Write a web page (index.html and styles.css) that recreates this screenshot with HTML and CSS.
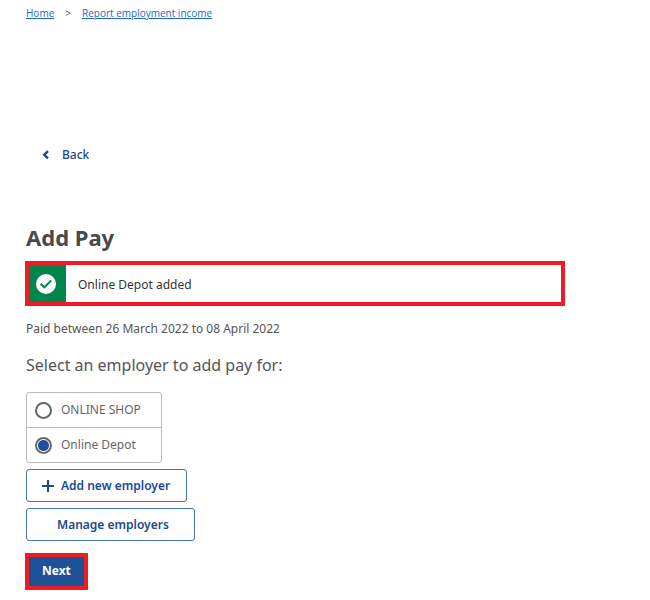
FILE: index.html
```html
<!DOCTYPE html>
<html lang="en">
<head>
    <meta charset="UTF-8">
    <meta name="viewport" content="width=device-width, initial-scale=1.0">
    <title>Add Pay</title>
    <link rel="stylesheet" href="styles.css">
</head>
<body>
    <nav class="breadcrumb">
        <a href="#">Home</a>
        <span class="separator">&gt;</span>
        <a href="#">Report employment income</a>
    </nav>

    <a href="#" class="back-link">
        <svg width="8" height="10" viewBox="0 0 8 10"><path d="M6 1.2L2.2 4.8L6 8.4" fill="none" stroke="currentColor" stroke-width="2.4"/></svg>
        Back
    </a>

    <main>
        <h1>Add Pay</h1>

        <div class="alert" role="status">
            <div class="alert-icon">
                <svg width="20" height="20" viewBox="0 0 20 20">
                    <circle cx="10" cy="10" r="10" fill="#fff"/>
                    <path d="M4.6 9.8L8.3 13.3L15.2 6.4" fill="none" stroke="#00854d" stroke-width="2"/>
                </svg>
            </div>
            <p>Online Depot added</p>
        </div>

        <p class="period">Paid between 26 March 2022 to 08 April 2022</p>

        <form>
            <fieldset>
                <legend>Select an employer to add pay for:</legend>
                <div class="employers">
                    <label class="employer" for="employer-shop">
                        <input type="radio" id="employer-shop" name="employer">
                        ONLINE SHOP
                    </label>
                    <label class="employer" for="employer-depot">
                        <input type="radio" id="employer-depot" name="employer" checked>
                        Online Depot
                    </label>
                </div>
            </fieldset>

            <div class="actions">
                <button type="button" class="btn">
                    <svg width="12" height="12" viewBox="0 0 12 12"><path d="M6 0V12M0 6H12" stroke="currentColor" stroke-width="2"/></svg>
                    Add new employer
                </button>
                <button type="button" class="btn btn-manage">Manage employers</button>
                <button type="submit" class="btn-next">Next</button>
            </div>
        </form>
    </main>
</body>
</html>
```
FILE: styles.css
```css
* {
    box-sizing: border-box;
}
body {
    font-family: "Noto Sans", "Open Sans", sans-serif;
    font-size: 12px;
    line-height: 20px;
    color: #555;
    background-color: #fff;
    margin: 0;
    padding: 3px 26px 0;
}
.breadcrumb {
    display: flex;
    gap: 11px;
    font-family: "Open Sans", sans-serif;
    font-size: 10px;
}
.breadcrumb a {
    color: #1f66c1;
}
.back-link {
    display: inline-flex;
    align-items: center;
    gap: 12px;
    margin: 122px 0 0 16px;
    color: #1c4a8f;
    font-weight: 500;
    text-decoration: none;
}
h1 {
    margin: 55px 0 8px;
    font-size: 22px;
    line-height: 32px;
    color: #4a4a4a;
}
.alert {
    display: flex;
    height: 45px;
    max-width: 540px;
    margin: 0 0 0 -1px;
    border: 4px solid #ed1c24;
    color: #333;
}
.alert-icon {
    display: flex;
    align-items: center;
    justify-content: center;
    width: 37px;
    padding-right: 3px;
    background-color: #00854d;
}
.alert p {
    margin: 0 12px;
    line-height: 40px;
}
.period {
    margin: 13px 0 12px;
}
fieldset {
    border: none;
    margin: 0;
    padding: 0;
}
legend {
    padding: 0;
    margin-bottom: 13px;
    font-size: 16px;
    line-height: 28px;
}
.employers {
    width: fit-content;
    border: 1px solid #bbb;
    border-radius: 3px;
}
.employer {
    display: flex;
    align-items: center;
    gap: 9px;
    height: 34px;
    padding: 0 20px 0 8px;
    color: #666;
}
.employer + .employer {
    height: 35px;
    border-top: 1px solid #bbb;
}
.employer input {
    appearance: none;
    width: 17px;
    height: 17px;
    margin: 0;
    border: 2px solid #666;
    border-radius: 50%;
}
.employer input:checked {
    background: radial-gradient(circle, #1c509c 5px, #fff 6px);
}
.actions {
    display: flex;
    flex-direction: column;
    align-items: flex-start;
    gap: 6px;
    margin-top: 6px;
}
.btn {
    display: flex;
    align-items: center;
    gap: 7px;
    height: 33px;
    padding: 0 16px 0 15px;
    border: 1px solid #4673b4;
    border-radius: 3px;
    background-color: #fff;
    color: #1c4a8f;
    font: 600 12px "Noto Sans", sans-serif;
    cursor: pointer;
}
.btn-manage {
    padding: 0 25px 0 30px;
}
.btn-next {
    height: 37px;
    margin: 6px 0 0 -1px;
    padding: 0 13px 3px;
    border: 4px solid #ed1c24;
    background-color: #1c5296;
    color: #fff;
    font: 700 12px "Noto Sans", sans-serif;
    cursor: pointer;
}
```
